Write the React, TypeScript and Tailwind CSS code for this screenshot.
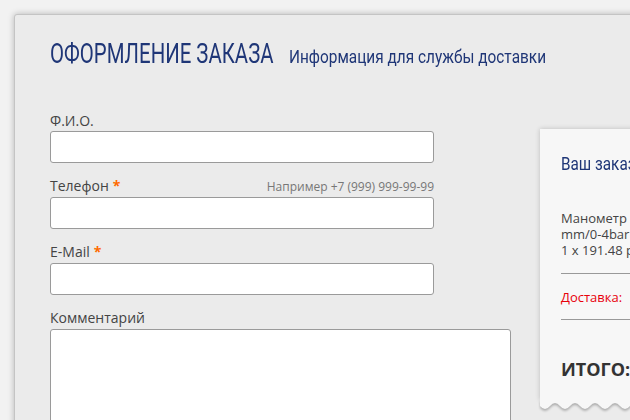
const label = "text-[14px] leading-[16px] text-[#444]";
const input =
  "block h-[32px] w-[384px] rounded-[3px] border border-[#9a9a9a] bg-white";
const narrow = { fontFamily: "Roboto, sans-serif" };

function Star() {
  return <span className="ml-[4px] font-bold leading-[16px] text-[#ff6a00]">*</span>;
}

function Narrow({ w, s, className, children }: { w: number; s: number; className: string; children: string }) {
  return (
    <span className={`inline-block whitespace-nowrap ${className}`} style={{ ...narrow, width: w }}>
      <span className="inline-block origin-left" style={{ transform: `scaleX(${s})` }}>
        {children}
      </span>
    </span>
  );
}

function Waves() {
  let d = "M0 0 H120 V6";
  for (let x = 120; x > 0; x -= 20) {
    d += ` Q${x - 5} 0 ${x - 10} 6 Q${x - 15} 12 ${x - 20} 6`;
  }
  d += " Z";
  return (
    <svg
      width="120"
      height="14"
      viewBox="0 0 120 14"
      className="block drop-shadow-[0_2px_1px_rgba(0,0,0,0.25)]"
    >
      <path d={d} fill="#f7f7f7" />
    </svg>
  );
}

export default function App() {
  return (
    <div
      className="h-[420px] w-[630px] overflow-hidden bg-[#f2f2f2] pl-[14px] pt-[14px]"
      style={{ fontFamily: '"Open Sans", "Noto Sans", sans-serif' }}
    >
      <div className="h-[440px] w-[700px] rounded-[3px] border border-[#c4c4c4] bg-[#ebebeb] px-[35px] pt-[24px] shadow-[0_0_6px_rgba(0,0,0,0.25)]">
        <div className="flex items-baseline gap-[17px] text-[#1f3677]">
          <Narrow w={222} s={0.755} className="text-[27px] leading-[30px]">
            ОФОРМЛЕНИЕ ЗАКАЗА
          </Narrow>
          <Narrow w={256} s={0.81} className="text-[19px] leading-[22px]">
            Информация для службы доставки
          </Narrow>
        </div>

        <div className="mt-[44px] flex">
          <form className="w-[460px]">
            <div className={label}>Ф.И.О.</div>
            <div className={`mt-[2px] ${input}`} />

            <div className="mt-[15px] flex h-[16px] w-[384px] items-baseline justify-between leading-[16px]">
              <span className={label}>
                Телефон
                <Star />
              </span>
              <span className="text-[12px] leading-[16px] text-[#777]">
                Например +7 (999) 999-99-99
              </span>
            </div>
            <div className={`mt-[3px] ${input}`} />

            <div className={`mt-[15px] h-[16px] ${label}`}>
              E-Mail
              <Star />
            </div>
            <div className={`mt-[3px] ${input}`} />

            <div className={`mt-[15px] h-[16px] ${label}`}>Комментарий</div>
            <div className="mt-[3px] h-[120px] w-[461px] rounded-[3px] border border-[#9a9a9a] bg-white" />
          </form>

          <aside className="ml-[30px] mt-[16px] w-[120px]">
            <div className="bg-[#f7f7f7] pl-[21px] pt-[23px] shadow-[0_0_5px_rgba(0,0,0,0.2)]">
              <Narrow w={100} s={0.85} className="text-[18px] leading-[22px] text-[#1f3677]">
                Ваш заказ
              </Narrow>
              <div className="mt-[34px] whitespace-nowrap text-[13px] leading-[16px] text-[#444]">
                Манометр
                <br />
                mm/0-4bar
                <br />1 x 191.48 р.
              </div>
              <div className="mt-[15px] border-t border-[#999]" />
              <div className="mt-[15px] whitespace-nowrap text-[13px] leading-[16px] text-[#e8000b]">
                Доставка:
              </div>
              <div className="mt-[14px] border-t border-[#999]" />
              <div className="mt-[38px] whitespace-nowrap pb-[20px] text-[18px] font-bold leading-[22px] text-[#333]">
                ИТОГО:
              </div>
            </div>
            <Waves />
          </aside>
        </div>
      </div>
    </div>
  );
}
